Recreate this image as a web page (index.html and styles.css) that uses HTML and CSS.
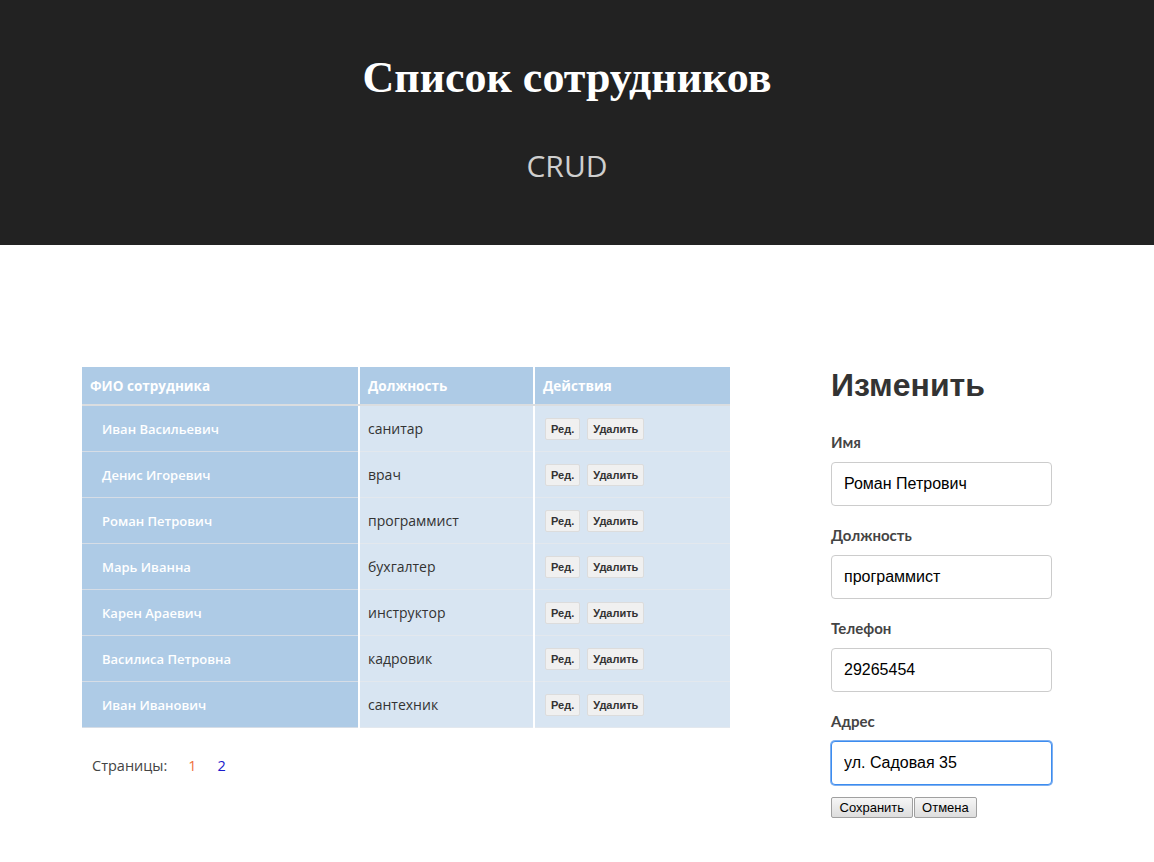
FILE: index.html
```html
<!DOCTYPE html>
<html lang="ru">
<head>
<meta charset="utf-8">
<title>Список сотрудников</title>
<link rel="stylesheet" href="styles.css">
</head>
<body>
<header class="hero">
  <h1 class="hero-title">Список сотрудников</h1>
  <p class="hero-sub">CRUD</p>
</header>
<main class="content">
  <section class="list">
    <table class="staff">
      <thead>
        <tr><th class="c1">ФИО сотрудника</th><th class="c2">Должность</th><th class="c3">Действия</th></tr>
      </thead>
      <tbody>
        <tr><td class="name">Иван Васильевич</td><td class="pos">санитар</td><td class="act"><button class="tbtn">Ред.</button><button class="tbtn">Удалить</button></td></tr>
        <tr><td class="name">Денис Игоревич</td><td class="pos">врач</td><td class="act"><button class="tbtn">Ред.</button><button class="tbtn">Удалить</button></td></tr>
        <tr><td class="name">Роман Петрович</td><td class="pos">программист</td><td class="act"><button class="tbtn">Ред.</button><button class="tbtn">Удалить</button></td></tr>
        <tr><td class="name">Марь Иванна</td><td class="pos">бухгалтер</td><td class="act"><button class="tbtn">Ред.</button><button class="tbtn">Удалить</button></td></tr>
        <tr><td class="name">Карен Араевич</td><td class="pos">инструктор</td><td class="act"><button class="tbtn">Ред.</button><button class="tbtn">Удалить</button></td></tr>
        <tr><td class="name">Василиса Петровна</td><td class="pos">кадровик</td><td class="act"><button class="tbtn">Ред.</button><button class="tbtn">Удалить</button></td></tr>
        <tr><td class="name">Иван Иванович</td><td class="pos">сантехник</td><td class="act"><button class="tbtn">Ред.</button><button class="tbtn">Удалить</button></td></tr>
      </tbody>
    </table>
    <div class="pages">
      <span class="pages-label">Страницы:</span>
      <a class="page current">1</a>
      <a class="page">2</a>
    </div>
  </section>
  <aside class="editor">
    <h2 class="editor-title">Изменить</h2>
    <label class="field-label">Имя</label>
    <input class="field" type="text" value="Роман Петрович">
    <label class="field-label">Должность</label>
    <input class="field" type="text" value="программист">
    <label class="field-label">Телефон</label>
    <input class="field" type="text" value="29265454">
    <label class="field-label">Адрес</label>
    <input class="field focused" type="text" value="ул. Садовая 35" autofocus>
    <div class="form-actions">
      <button class="fbtn">Сохранить</button><button class="fbtn">Отмена</button>
    </div>
  </aside>
</main>
</body>
</html>
```

FILE: styles.css
```css
html, body {
  margin: 0;
  padding: 0;
  background: #fff;
}
body {
  font-family: "Open Sans", "Noto Sans", sans-serif;
  color: #333;
}
.hero {
  background: #222222;
  height: 245px;
  box-sizing: border-box;
  padding: 50px 20px 0 0;
  text-align: center;
}
.hero-title {
  margin: 0;
  font-family: "Liberation Serif", serif;
  font-weight: bold;
  font-size: 44px;
  line-height: 56px;
  color: #fff;
}
.hero-sub {
  margin: 40px 0 0;
  font-family: "Open Sans", sans-serif;
  font-size: 30px;
  line-height: 40px;
  color: #cfcfcf;
}
.content {
  display: flex;
  padding: 122px 0 0 82px;
}
.list {
  width: 648px;
}
.staff {
  width: 648px;
  border-collapse: collapse;
  font-size: 14px;
}
.staff th {
  height: 37px;
  padding: 0 8px;
  text-align: left;
  font-size: 13.5px;
  font-weight: bold;
  color: #fff;
  background: #aecbe6;
  border-right: 2px solid #fff;
  border-bottom: 2px solid #dadde0;
}
.staff th.c1 { width: 260px; }
.staff th.c2 { width: 157px; }
.staff th:last-child, .staff td:last-child { border-right: none; }
.staff td {
  height: 45px;
  padding: 0 8px;
  border-right: 2px solid #fff;
  border-bottom: 1px solid #e3e8ee;
  background: #d8e5f2;
  color: #333;
}
.staff td.name {
  background: #aecbe6;
  color: #fff;
  font-weight: 600;
  font-size: 13px;
  padding-left: 20px;
  border-bottom-color: #d6dde6;
}
.tbtn {
  font-family: "Liberation Sans", Arial, sans-serif;
  font-size: 11px;
  font-weight: bold;
  color: #333;
  background: #f0f0f0;
  border: 1px solid #dcdcdc;
  border-radius: 2px;
  height: 22px;
  padding: 0 5px;
  margin: 0 5px 0 2px;
}
.pages {
  display: flex;
  align-items: center;
  padding: 28px 0 0 10px;
  font-size: 14.5px;
  color: #444;
}
.pages-label {
  margin-right: 21px;
}
.page {
  margin-right: 21px;
  color: #1a1acc;
}
.page.current {
  color: #f0703c;
}
.editor {
  margin-left: 101px;
  width: 221px;
  display: flex;
  flex-direction: column;
  align-items: flex-start;
}
.editor-title {
  margin: 0;
  font-family: "Liberation Sans", Arial, sans-serif;
  font-size: 32px;
  line-height: 36px;
  font-weight: bold;
  color: #333;
  margin-bottom: 30px;
}
.field-label {
  font-family: "Lato", "Open Sans", sans-serif;
  font-weight: bold;
  font-size: 15px;
  line-height: 18px;
  color: #444;
  margin-bottom: 11px;
}
.field {
  width: 221px;
  height: 44px;
  box-sizing: border-box;
  border: 1px solid #cccccc;
  border-radius: 4px;
  padding: 0 12px;
  font-family: "Liberation Sans", Arial, sans-serif;
  font-size: 16px;
  color: #000;
  margin-bottom: 20px;
  outline: none;
}
.field.focused {
  border: 1px solid #3c8cf0;
  box-shadow: 0 0 0 1px #7fb0f0;
  margin-bottom: 12px;
}
.form-actions {
  display: flex;
}
.fbtn {
  font-family: "Liberation Sans", Arial, sans-serif;
  font-size: 13px;
  height: 21px;
  padding: 0 7.5px;
  color: #000;
  background: linear-gradient(#f6f6f6, #dddddd);
  border: 1px solid #a0a0a0;
  border-radius: 2px;
  margin: 0 1px 0 0;
}
```
